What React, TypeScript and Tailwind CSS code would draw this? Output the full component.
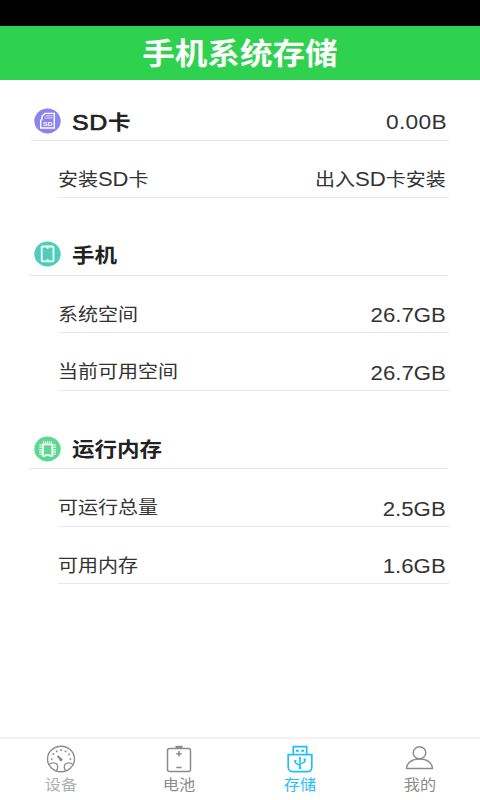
import React from "react";

const FONT = "font-['Liberation_Sans','Noto_Sans_CJK_SC',sans-serif]";

/* Wide lettering: Latin runs are set slightly larger than the Chinese ones. */
function Wide({ text, latin, className }: { text: string; latin: string; className: string }) {
  const runs = text.match(/[\x20-\x7e]+|[^\x20-\x7e]+/g) ?? [];
  return (
    <span className={`inline-block whitespace-nowrap scale-x-[1.11] ${className}`}>
      {runs.map((run, i) => (
        <span key={i} className={/^[\x20-\x7e]/.test(run) ? latin : ""}>
          {run}
        </span>
      ))}
    </span>
  );
}

function Heading({ icon, title, value, className, titleShift }: { icon: React.ReactNode; title: string; value?: string; className: string; titleShift: string }) {
  return (
    <div className={`flex items-center border-b border-[#e6e6e6] ${className}`}>
      {icon}
      <Wide
        text={title}
        latin="text-[22.5px] font-normal tracking-[0.6px] [-webkit-text-stroke:0.7px_#222]"
        className={`ml-[11px] origin-left text-[20.3px] font-bold leading-[28px] text-[#222] ${titleShift}`}
      />
      {value && <Wide text={value} latin="text-[20.5px] tracking-[0.3px]" className="ml-auto mr-[2px] mt-[3px] origin-right leading-[28px] text-[#333]" />}
    </div>
  );
}

function Row({ label, value, className }: { label: string; value: string; className: string }) {
  return (
    <div className={`ml-[58px] mr-[31px] flex items-center justify-between border-b border-[#e8e8e8] pt-[21px] ${className}`}>
      <Wide text={label} latin="text-[19.8px]" className="-ml-[0.5px] origin-left text-[18px] leading-[28px] text-[#333]" />
      <Wide
        text={value}
        latin="text-[20px]"
        className={`mr-[3px] origin-right text-[18px] leading-[28px] text-[#333] ${value.endsWith("GB") ? "mt-[2px]" : ""}`}
      />
    </div>
  );
}

const SdIcon = () => (
  <svg width="27" height="26" viewBox="0 0 27 26" fill="none">
    <ellipse cx="13.5" cy="13" rx="13.2" ry="12.5" fill="#8d83ee" />
    <path d="M11 5.4h9.3v14.6H6.7v-7.5l1.3-1.6V8.2L11 5.4Z" stroke="#fff" strokeWidth="1.4" />
    <path d="M11.5 7.8h7M10.3 10h8.500" stroke="#fff" strokeWidth="1" opacity=".7" />
    <text x="13.7" y="18.2" textAnchor="middle" fontSize="6" fontWeight="700" textLength="9.5" lengthAdjust="spacingAndGlyphs" fill="#fff">SD</text>
  </svg>
);

const PhoneIcon = () => (
  <svg width="27" height="26" viewBox="0 0 27 26" fill="none">
    <ellipse cx="13.5" cy="13" rx="13.2" ry="12.5" fill="#4cceba" />
    <rect x="7.7" y="5.5" width="11.8" height="14.8" rx="1" stroke="#fff" strokeWidth="1.8" />
    <path d="M13.6 5.2v2.6M13.6 18v2.6" stroke="#fff" strokeWidth="1.8" />
  </svg>
);

const ChipIcon = () => (
  <svg width="27" height="26" viewBox="0 0 27 26" fill="none">
    <ellipse cx="13.5" cy="13" rx="13.2" ry="12.5" fill="#5bd98e" />
    <path d="M9 8.3h9.2v11.7h-2l-1.2-1.2h-2.8L11 20H9V8.3Z" stroke="#fff" strokeWidth="1.7" />
    <path d="M9.5 5v2.5M11.5 5v2.5M13.5 5v2.5M15.5 5v2.5M17.5 5v2.5M5.2 9h3M5.2 11.3h3M5.2 13.6h3M5.2 15.9h3M5.2 18.2h3M19 9h3M19 11.3h3M19 13.6h3M19 15.9h3M19 18.2h3" stroke="#fff" strokeWidth="1.1" />
  </svg>
);

const GaugeIcon = () => (
  <svg className="translate-x-px" width="30" height="28" viewBox="0 0 30 28" fill="none" stroke="#8c8c8c" strokeWidth="1.4">
    <ellipse cx="15" cy="14" rx="13.5" ry="12.8" />
    <path d="M3.3 19.4c1-1 2.3-1.5 3.7-1.5 2.9 0 4.7 1.7 4.7 4 0 1.5-.6 2.8-1.5 3.9M26.7 19.4c-1-1-2.3-1.5-3.7-1.5-2.9 0-4.7 1.7-4.7 4 0 1.5.6 2.8 1.5 3.9" />
    <path d="m11.7 11 3.2 3.6" strokeWidth="2.2" />
    <circle cx="15" cy="14.6" r="1.6" fill="#8c8c8c" stroke="none" />
    <path d="M4.9 14h1.7M6.5 9.2h1.7M9.9 6.3h1.7M14.2 5.2h1.7M18.7 6.4h1.7M22.2 9.4h1.7M23.6 14h1.7" strokeWidth="1.7" />
  </svg>
);

const BatteryIcon = () => (
  <svg className="-translate-x-px" width="30" height="28" viewBox="0 0 30 28" fill="none" stroke="#8c8c8c" strokeWidth="1.5">
    <rect x="3.5" y="3.4" width="23" height="23" rx="2" />
    <path d="M11.5 2h7" strokeWidth="2.4" />
    <path d="M12.3 8.8h5.4M15 6.1v5.4M12.3 22.5h5.4" strokeWidth="1.6" />
  </svg>
);

const UsbIcon = () => (
  <svg width="30" height="28" viewBox="0 0 30 28" fill="none" stroke="#1fbffa" strokeWidth="1.7">
    <path d="M8.3 9.5V1.7h13.4v7.8" />
    <path d="M3.2 9.7h23.6v12.2c0 3-1.8 4.7-4.6 4.7H7.8c-2.8 0-4.6-1.7-4.6-4.7V9.7Z" />
    <path d="M11 5.8h2.8M16.2 5.8H19" strokeWidth="1.9" />
    <path d="M15 13v10M10.3 16v1.3c0 1.8 4.7 1.6 4.7 4M19.7 14.5v2c0 2-4.7 1.3-4.7 3.6" strokeWidth="1.5" />
    <circle cx="15" cy="23" r="1.3" fill="#1fbffa" stroke="none" />
    <path d="M9.2 15.8h2.2M18.6 14.5h2.2M13.8 13.2h2.4" strokeWidth="1.8" />
  </svg>
);

const UserIcon = () => (
  <svg width="30" height="28" viewBox="0 0 30 28" fill="none" stroke="#8c8c8c" strokeWidth="1.5">
    <ellipse cx="14.5" cy="7.7" rx="6.3" ry="6" />
    <path d="M1.500 23.600c.2-5.800 5.400-9.600 13-9.600s12.800 3.800 13 9.600Z" />
  </svg>
);

const tabs = [
  { label: "设备", icon: <GaugeIcon />, color: "text-[#b0b0b0]", shift: "ml-[2px]" },
  { label: "电池", icon: <BatteryIcon />, color: "text-[#8c8c8c]", shift: "-ml-px" },
  { label: "存储", icon: <UsbIcon />, color: "text-[#1fbffa]", shift: "" },
  { label: "我的", icon: <UserIcon />, color: "text-[#8c8c8c]", shift: "" },
];

export default function App() {
  return (
    <div className={`flex h-[800px] w-[480px] flex-col overflow-hidden bg-white ${FONT}`}>
      <div className="h-[26px] bg-black" />
      <header className="flex h-[54px] items-center justify-center bg-[#2fd24f] text-white">
        <h1 className="scale-x-[1.11] pt-[2px] text-[29.3px] font-bold leading-[54px]">手机系统存储</h1>
      </header>

      <main className="flex-1">
        <Heading className="ml-[31px] mr-[31px] h-[61px] pl-[3px] pt-[22px]" titleShift="mt-[3px]" icon={<SdIcon />} title="SD卡" value="0.00B" />
        <Row className="h-[57px]" label="安装SD卡" value="出入SD卡安装" />
        <Heading className="ml-[29px] mr-[33px] h-[78px] pl-[5px] pt-[34px]" titleShift="mt-[5px]" icon={<PhoneIcon />} title="手机" />
        <Row className="h-[57px]" label="系统空间" value="26.7GB" />
        <Row className="h-[58px]" label="当前可用空间" value="26.7GB" />
        <Heading className="ml-[29px] mr-[33px] h-[78px] pl-[5px] pt-[39px]" titleShift="mt-[1px]" icon={<ChipIcon />} title="运行内存" />
        <Row className="h-[58px]" label="可运行总量" value="2.5GB" />
        <Row className="h-[57px]" label="可用内存" value="1.6GB" />
      </main>

      <nav className="flex h-[63px] border-t-2 border-[#f3f3f3]">
        {tabs.map((tab) => (
          <div key={tab.label} className={`flex flex-1 flex-col items-center pt-[6px] ${tab.color}`}>
            {tab.icon}
            <span className={`mt-[2px] scale-x-[1.08] text-[15px] leading-[20px] ${tab.shift}`}>{tab.label}</span>
          </div>
        ))}
      </nav>
    </div>
  );
}
